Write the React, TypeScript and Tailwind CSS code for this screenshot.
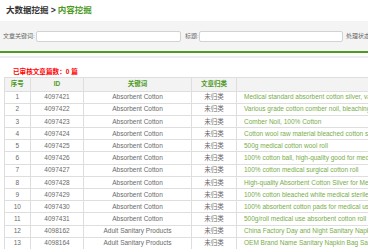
const rows = [
  ["1", "4097421", "Absorbent Cotton", "Medical standard absorbent cotton silver, various grades"],
  ["2", "4097422", "Absorbent Cotton", "Various grade cotton comber noil, bleaching cotton"],
  ["3", "4097423", "Absorbent Cotton", "Comber Noil, 100% Cotton"],
  ["4", "4097424", "Absorbent Cotton", "Cotton wool raw material bleached cotton silver"],
  ["5", "4097425", "Absorbent Cotton", "500g medical cotton wool roll"],
  ["6", "4097426", "Absorbent Cotton", "100% cotton ball, high-quality good for medical use"],
  ["7", "4097427", "Absorbent Cotton", "100% cotton medical surgical cotton roll"],
  ["8", "4097428", "Absorbent Cotton", "High-quality Absorbent Cotton Silver for Medical Use"],
  ["9", "4097429", "Absorbent Cotton", "100% cotton bleached white medical sterile cotton"],
  ["10", "4097430", "Absorbent Cotton", "100% absorbent cotton pads for medical use"],
  ["11", "4097431", "Absorbent Cotton", "500g/roll medical use absorbent cotton roll"],
  ["12", "4098162", "Adult Sanitary Products", "China Factory Day and Night Sanitary Napkin Pads"],
  ["13", "4098164", "Adult Sanitary Products", "OEM Brand Name Sanitary Napkin Bag Sandwich"],
]

const cjk = { fontFamily: '"Liberation Sans", "Noto Sans CJK SC", sans-serif' }

export default function App() {
  return (
    <div className="w-[368px] h-[249px] overflow-hidden bg-white" style={cjk}>
      <div className="w-[620px]">
        {/* Breadcrumb */}
        <div className="h-[21px] flex items-center pl-[6px] text-[8.5px] font-bold text-[#333]">
          <span>大数据挖掘 &gt; </span>
          <span className="text-[#4c9a1e] ml-[2px]">内容挖掘</span>
        </div>

        {/* Search bar */}
        <div className="h-[30px] bg-[#f4f4f4] flex items-center text-[6px] text-[#666] whitespace-nowrap">
          <span className="pl-[3px] w-[36px]">文章关键词:</span>
          <input className="w-[145px] h-[11px] bg-white border border-[#d2d2d2] rounded-[2px]" />
          <span className="ml-[4px] w-[14px]">标题:</span>
          <input className="w-[144px] h-[11px] bg-white border border-[#d2d2d2] rounded-[2px]" />
          <span className="ml-[3px]">处理状态:</span>
        </div>
        <div className="h-[2px] bg-[#4c9a1e]" />
        <div className="h-[3px]" />
        <div className="h-[2px] bg-[#ededed]" />

        {/* Count */}
        <div className="h-[19px] pt-[9px] pl-[13px] text-[6.6px] font-bold text-[#ff0000] leading-[9px]">
          已审核文章篇数：0 篇
        </div>

        {/* Table */}
        <table className="ml-[3.5px] border-collapse text-[6.5px] text-[#6a6a6a] table-fixed w-[600px]">
          <colgroup>
            <col className="w-[26.5px]" />
            <col className="w-[53px]" />
            <col className="w-[108px]" />
            <col className="w-[45px]" />
            <col />
          </colgroup>
          <thead>
            <tr className="h-[13.5px] bg-[#f3f3f3] text-[#4c9a1e]">
              <th className="border border-[#dedede] font-bold">序号</th>
              <th className="border border-[#dedede] font-bold">ID</th>
              <th className="border border-[#dedede] font-bold">关键词</th>
              <th className="border border-[#dedede] font-bold">文章归类</th>
              <th className="border border-[#dedede]"></th>
            </tr>
          </thead>
          <tbody>
            {rows.map((r) => (
              <tr key={r[0]} className="h-[12.2px]">
                <td className="border border-[#dedede] text-center p-0">{r[0]}</td>
                <td className="border border-[#dedede] text-center p-0">{r[1]}</td>
                <td className="border border-[#dedede] text-center p-0">{r[2]}</td>
                <td className="border border-[#dedede] text-center p-0">未归类</td>
                <td className="border border-[#dedede] pl-[7px] p-0 text-[#78ad4a] whitespace-nowrap">{r[3]}</td>
              </tr>
            ))}
          </tbody>
        </table>
      </div>
    </div>
  )
}
